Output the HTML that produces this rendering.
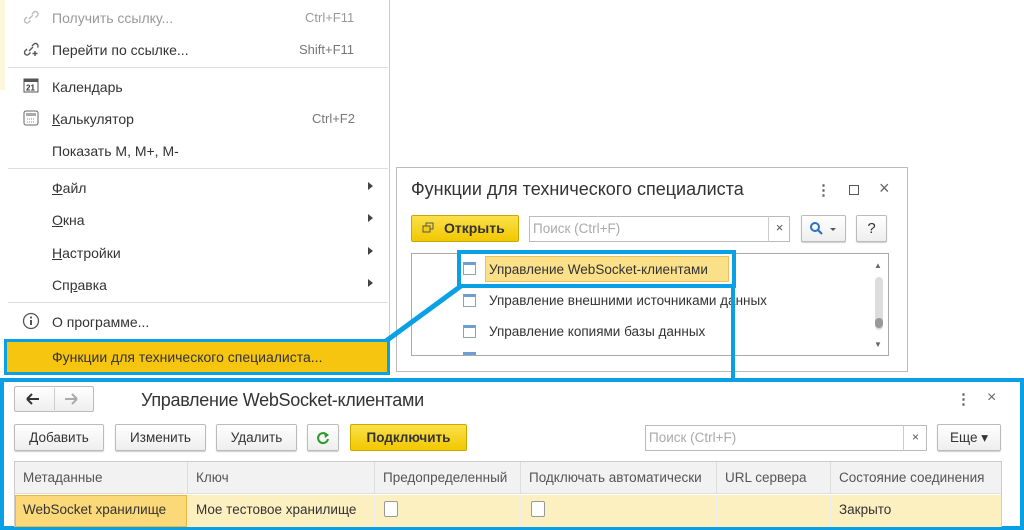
<!DOCTYPE html><html><head><meta charset="utf-8"><style>
*{box-sizing:border-box;margin:0;padding:0}
body{width:1024px;height:530px;position:relative;overflow:hidden;background:#fff;font-family:"Liberation Sans",sans-serif;color:#333}
.a{position:absolute;white-space:nowrap}
.mi{position:absolute;left:52px;font-size:14px;color:#333}
.sc{position:absolute;font-size:13px;color:#777}
.sep{position:absolute;left:8px;width:380px;height:1px;background:#ddd}
.arr{position:absolute;left:368px;width:0;height:0;border-left:5px solid #444;border-top:4.5px solid transparent;border-bottom:4.5px solid transparent}
.btn{position:absolute;border:1px solid #bbb;border-radius:2px;background:linear-gradient(#fff,#eee);font-size:13.5px;text-align:center;color:#333;box-shadow:0 1px 1px #ccc}
.li{position:absolute;font-size:13.5px;color:#333}
.ic{position:absolute;width:13px;height:13px;border:1px solid #8aa;background:#fff;border-top:3px solid #6a9fd0}
.th{position:absolute;top:462px;height:32px;line-height:32px;font-size:13.5px;color:#555;padding-left:8px;border-right:1px solid #ddd}
.td{position:absolute;top:495px;height:32px;line-height:30px;font-size:13.5px;color:#333;padding-left:8px;border-right:1px solid #eee}
.cb{position:absolute;width:14px;height:16px;border:1px solid #999;border-radius:2px;background:#fff}
u{text-decoration:underline}
</style></head><body>
<div class="a" style="left:0;top:0;width:5px;height:90px;background:#fcf6dc"></div>
<div class="a" style="left:5px;top:0;width:385px;height:375px;background:#fff;border-right:1px solid #ccc"></div>
<svg class="a" style="left:22px;top:9px" width="18" height="16"><path d="M7 10 L11 6 M5 8 l-2 2 a2.5 2.5 0 0 0 3.5 3.5 l2-2 M10 5 l2-2 a2.5 2.5 0 0 1 3.5 3.5 l-2 2" stroke="#bbb" stroke-width="1.4" fill="none"/></svg>
<div class="mi" style="top:10px;color:#999">Получить ссылку...</div><div class="sc" style="left:305px;top:10px;color:#999">Ctrl+F11</div>
<svg class="a" style="left:22px;top:41px" width="18" height="16"><path d="M7 10 L11 6 M5 8 l-2 2 a2.5 2.5 0 0 0 3.5 3.5 l2-2 M10 5 l2-2 a2.5 2.5 0 0 1 3.5 3.5 M13 10 v5 M10.5 12.5 h5" stroke="#555" stroke-width="1.4" fill="none"/></svg>
<div class="mi" style="top:42px">Перейти по ссылке...</div><div class="sc" style="left:299px;top:42px">Shift+F11</div>
<div class="sep" style="top:67px"></div>
<svg class="a" style="left:23px;top:77px" width="16" height="16"><rect x="1" y="2" width="14" height="13" fill="#fff" stroke="#555"/><rect x="1" y="2" width="14" height="3" fill="#555"/><text x="3" y="13.5" font-size="8" font-family="Liberation Sans" font-weight="bold" fill="#333">21</text></svg>
<div class="mi" style="top:79px">Календарь</div>
<svg class="a" style="left:23px;top:110px" width="16" height="16"><rect x="1" y="1" width="14" height="14" rx="2" fill="#fff" stroke="#666"/><rect x="3" y="3" width="10" height="3" fill="#aaa"/><path d="M4 9h8M4 12h8" stroke="#888" stroke-dasharray="1 1"/></svg>
<div class="mi" style="top:111px"><u>К</u>алькулятор</div><div class="sc" style="left:312px;top:111px">Ctrl+F2</div>
<div class="mi" style="top:143px">Показать M, M+, M-</div>
<div class="sep" style="top:168px"></div>
<div class="mi" style="top:180px"><u>Ф</u>айл</div><div class="arr" style="top:182px"></div>
<div class="mi" style="top:212px"><u>О</u>кна</div><div class="arr" style="top:214px"></div>
<div class="mi" style="top:245px"><u>Н</u>астройки</div><div class="arr" style="top:247px"></div>
<div class="mi" style="top:277px">Сп<u>р</u>авка</div><div class="arr" style="top:279px"></div>
<div class="sep" style="top:302px"></div>
<svg class="a" style="left:22px;top:312px" width="18" height="18"><circle cx="9" cy="9" r="7.5" fill="none" stroke="#555" stroke-width="1.3"/><circle cx="9" cy="5.5" r="1.1" fill="#555"/><path d="M9 8v5" stroke="#555" stroke-width="2"/></svg>
<div class="mi" style="top:314px">О программе...</div>
<div class="a" style="left:4px;top:339px;width:386px;height:36px;border:3px solid #0aa0e6;background:#f6c510"></div>
<div class="mi" style="top:349px">Функции для технического специалиста...</div>
<div class="a" style="left:396px;top:167px;width:512px;height:205px;border:1px solid #bbb;background:#fff"></div>
<div class="a" style="left:411px;top:179px;font-size:18px;color:#333">Функции для технического специалиста</div>
<div class="a" style="left:816px;top:181px;font-size:15px;color:#666;font-weight:bold">⋮</div>
<div class="a" style="left:849px;top:185px;width:10px;height:10px;border:1.5px solid #555"></div>
<div class="a" style="left:879px;top:178px;font-size:18px;color:#666">×</div>
<div class="a" style="left:411px;top:215px;width:108px;height:27px;border:1px solid #c9a800;border-radius:2px;background:linear-gradient(#fbe04a,#f2c800);font-size:14px;font-weight:bold;line-height:25px;padding-left:32px;color:#333">Открыть</div>
<svg class="a" style="left:422px;top:222px" width="12" height="12"><rect x="4" y="1" width="7" height="6" fill="none" stroke="#555"/><rect x="1" y="4" width="7" height="6" fill="#f4cb10" stroke="#555"/></svg>
<div class="a" style="left:529px;top:216px;width:261px;height:26px;border:1px solid #bbb;background:#fff;font-size:13.5px;color:#aaa;line-height:24px;padding-left:3px">Поиск (Ctrl+F)</div>
<div class="a" style="left:768px;top:216px;width:22px;height:26px;border-left:1px solid #ccc;font-size:13px;color:#555;line-height:24px;text-align:center">×</div>
<div class="btn" style="left:801px;top:215px;width:45px;height:27px"></div>
<svg class="a" style="left:809px;top:221px" width="30" height="16"><circle cx="6" cy="6" r="4" fill="none" stroke="#2a72c4" stroke-width="2"/><path d="M9 9l4 4" stroke="#2a72c4" stroke-width="2.2"/><path d="M21 7l3 3 3-3z" fill="#555"/></svg>
<div class="btn" style="left:856px;top:215px;width:31px;height:27px;font-size:15px;line-height:25px">?</div>
<div class="a" style="left:411px;top:253px;width:478px;height:103px;border:1px solid #aaa;background:#fff;overflow:hidden"></div>
<div class="a" style="left:485px;top:256px;width:244px;height:26px;background:#fbe08a;border:1px solid #e8c060"></div>
<div class="ic" style="left:463px;top:262px"></div><div class="li" style="left:489px;top:262px">Управление WebSocket-клиентами</div>
<div class="ic" style="left:463px;top:294px"></div><div class="li" style="left:489px;top:293px">Управление внешними источниками данных</div>
<div class="ic" style="left:463px;top:325px"></div><div class="li" style="left:489px;top:324px">Управление копиями базы данных</div>
<div class="a" style="left:463px;top:352px;width:13px;height:3px;background:#6a9fd0"></div>
<div class="a" style="left:874px;top:261px;font-size:8px;color:#666">▲</div>
<div class="a" style="left:875px;top:277px;width:8px;height:53px;background:#ddd;border-radius:4px"></div>
<div class="a" style="left:875px;top:318px;width:8px;height:10px;background:#999;border-radius:4px"></div>
<div class="a" style="left:874px;top:340px;font-size:8px;color:#666">▼</div>
<div class="a" style="left:457px;top:250px;width:279px;height:38px;border:4px solid #0aa0e6"></div>
<svg class="a" style="left:0;top:0" width="1024" height="530"><path d="M386 341 L461 286" stroke="#0aa0e6" stroke-width="5"/><path d="M733 286 V380" stroke="#0aa0e6" stroke-width="4"/></svg>
<div class="a" style="left:0;top:378px;width:1024px;height:152px;border:4px solid #0aa0e6;background:#fff"></div>
<div class="a" style="left:14px;top:386px;width:80px;height:26px;border:1px solid #bbb;border-radius:2px;background:linear-gradient(#fff,#eee)"></div>
<div class="a" style="left:54px;top:388px;width:1px;height:22px;background:#ccc"></div>
<svg class="a" style="left:25px;top:392px" width="60" height="14"><path d="M2 7h12M2 7l5-5M2 7l5 5" stroke="#333" stroke-width="2" fill="none"/><path d="M40 7h12M52 7l-5-5M52 7l-5 5" stroke="#aaa" stroke-width="2" fill="none"/></svg>
<div class="a" style="left:141px;top:390px;font-size:18px;color:#333;letter-spacing:-0.3px">Управление WebSocket-клиентами</div>
<div class="a" style="left:956px;top:390px;font-size:15px;color:#666;font-weight:bold">⋮</div>
<div class="a" style="left:987px;top:389px;font-size:16px;color:#666">×</div>
<div class="btn" style="left:14px;top:424px;width:90px;height:27px;line-height:25px">Добавить</div>
<div class="btn" style="left:115px;top:424px;width:91px;height:27px;line-height:25px">Изменить</div>
<div class="btn" style="left:216px;top:424px;width:81px;height:27px;line-height:25px">Удалить</div>
<div class="btn" style="left:307px;top:424px;width:32px;height:27px"></div>
<svg class="a" style="left:315px;top:430px" width="16" height="16"><path d="M12 5 A5 5 0 1 0 13 9" stroke="#2a9a2a" stroke-width="2" fill="none"/><path d="M9 2 L14 5 L10 8z" fill="#2a9a2a"/></svg>
<div class="a" style="left:350px;top:424px;width:117px;height:27px;border:1px solid #c9a800;border-radius:2px;background:linear-gradient(#fbe04a,#f2c800);font-size:13.5px;font-weight:bold;text-align:center;line-height:25px;color:#333">Подключить</div>
<div class="a" style="left:645px;top:425px;width:282px;height:26px;border:1px solid #bbb;background:#fff;font-size:13.5px;color:#aaa;line-height:24px;padding-left:3px">Поиск (Ctrl+F)</div>
<div class="a" style="left:903px;top:425px;width:24px;height:26px;border-left:1px solid #ccc;font-size:12px;color:#555;line-height:24px;text-align:center">×</div>
<div class="btn" style="left:937px;top:424px;width:64px;height:27px;line-height:25px">Еще ▾</div>
<div class="a" style="left:14px;top:461px;width:988px;height:66px;border:1px solid #ccc;border-bottom:none"></div>
<div class="a" style="left:15px;top:462px;width:986px;height:32px;background:#f2f2f2;border-bottom:1px solid #ddd"></div>
<div class="a" style="left:15px;top:495px;width:986px;height:32px;background:#fcefc0"></div>
<div class="a" style="left:15px;top:495px;width:172px;height:32px;background:#fbd878;border:1px solid #e8b840"></div>
<div class="th" style="left:15px;width:173px">Метаданные</div>
<div class="th" style="left:188px;width:187px">Ключ</div>
<div class="th" style="left:375px;width:146px">Предопределенный</div>
<div class="th" style="left:521px;width:196px">Подключать автоматически</div>
<div class="th" style="left:717px;width:114px">URL сервера</div>
<div class="th" style="left:831px;width:170px;border:none">Состояние соединения</div>
<div class="td" style="left:15px;width:173px;border:none">WebSocket хранилище</div>
<div class="td" style="left:188px;width:187px">Мое тестовое хранилище</div>
<div class="td" style="left:375px;width:146px"></div>
<div class="td" style="left:521px;width:196px"></div>
<div class="td" style="left:717px;width:114px"></div>
<div class="td" style="left:831px;width:170px;border:none">Закрыто</div>
<div class="cb" style="left:384px;top:501px"></div>
<div class="cb" style="left:531px;top:501px"></div>
</body></html>
